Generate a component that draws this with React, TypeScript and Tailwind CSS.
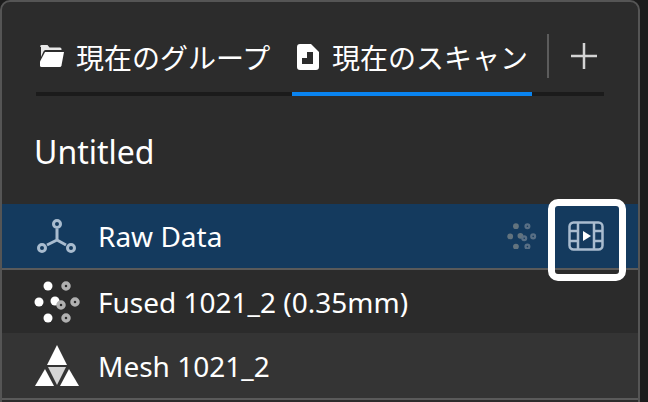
const jp = "font-['Noto_Sans_CJK_JP','Noto_Sans',sans-serif]";

function FolderIcon() {
  return (
    <svg width="24" height="24" viewBox="0 0 24 24" className="-mt-[2px] shrink-0">
      <path d="M0 2.500Q0 1 1.500 1H7.500L9.500 3.500H20Q21.500 3.500 21.500 5V6H5.500Q4 6 3.500 7.500L1 13V3Z" fill="#e8e8e8" />
      <path d="M5 8H24L21.500 21.500Q21.200 23 19.500 23H1.500Q0 23 0 21.500V17.500L5 8Z" fill="#ffffff" />
    </svg>
  );
}

function ScanIcon() {
  return (
    <svg width="22" height="26" viewBox="0 0 22 26" className="shrink-0">
      <path
        fillRule="evenodd"
        d="M3 0H14L22 8V23Q22 26 19 26H3Q0 26 0 23V3Q0 0 3 0ZM16 8H10V14H5V20H16Z"
        fill="#ffffff"
      />
    </svg>
  );
}

function GraphIcon() {
  return (
    <svg width="42" height="42" viewBox="0 0 42 42" className="shrink-0" fill="none" stroke="#a9bccf" strokeWidth="3">
      <circle cx="21" cy="9" r="3.500" />
      <circle cx="6" cy="33" r="3.500" />
      <circle cx="35" cy="33" r="3.500" />
      <path d="M21 14V25M21 25L11 30M21 25L30 30" />
    </svg>
  );
}

function DotsIcon({ solid, ring, width }: { solid: string; ring: string; width: number }) {
  return (
    <svg width={width} viewBox="0 0 47 42" className="shrink-0">
      <circle cx="14" cy="5" r="4.500" fill={solid} />
      <circle cx="5" cy="21" r="4.500" fill={solid} />
      <circle cx="21" cy="20" r="4.500" fill={solid} />
      <circle cx="14" cy="37" r="4.500" fill={solid} />
      <g fill="none" stroke={ring} strokeWidth="3.500">
        <circle cx="32" cy="5" r="3" />
        <circle cx="27" cy="24" r="3" />
        <circle cx="41" cy="21" r="3" />
        <circle cx="32" cy="37" r="3" />
      </g>
    </svg>
  );
}

function MeshIcon() {
  return (
    <svg width="44" height="42" viewBox="0 0 44 42" className="shrink-0" fill="#ffffff">
      <path d="M22 0L32 20H12Z" />
      <path d="M10 24L19 41H0Z" />
      <path d="M34 24L44 41H25Z" />
      <path d="M13 22H31L22 40Z" fill="#d4d4d4" />
    </svg>
  );
}

function FilmIcon() {
  return (
    <svg width="36" height="30" viewBox="0 0 36 30" className="shrink-0" fill="none" stroke="#a9bccf" strokeWidth="2.500">
      <rect x="1.500" y="1.500" width="33" height="27" rx="4" />
      <path d="M10 2V28M26 2V28M2 10H10M2 20H10M26 10H34M26 20H34" />
      <path d="M15 10L23 15L15 20Z" fill="#ffffff" stroke="none" />
    </svg>
  );
}

function RowIcon({ children }: { children: React.ReactNode }) {
  return <div className="flex w-[96px] shrink-0 justify-center pl-[16px] pr-[2px]">{children}</div>;
}

export default function App() {
  return (
    <div className={`h-[402px] w-[648px] overflow-hidden bg-[#1c1c1c] ${jp}`}>
      <div className="h-[420px] w-[640px] rounded-t-[10px] border-2 border-[#555555] bg-[#2c2c2c]">
        <div className="ml-[34px] mr-[34px] mt-[28px] flex h-[66px] items-stretch border-b-4 border-[#1b1b1b]">
          <div className="flex w-[256px] items-center gap-[12px] pb-[8px] pl-[4px]">
            <FolderIcon />
            <span className="whitespace-nowrap text-[28px] leading-none text-white">現在のグループ</span>
          </div>
          <div className="-mb-1 flex w-[240px] items-center gap-[13px] border-b-4 border-[#0a84f0] pb-[8px] pl-[5px]">
            <ScanIcon />
            <span className="whitespace-nowrap text-[28px] leading-none text-white">現在のスキャン</span>
          </div>
          <div className="mb-[14px] ml-[15px] mt-[4px] w-[2px] bg-[#5c5c5c]" />
          <div className="flex flex-1 items-center justify-center pb-[10px] pl-[15px] text-[#d4d4d4]">
            <svg width="26" height="26" viewBox="0 0 26 26" stroke="currentColor" strokeWidth="2.500">
              <path d="M13 0V26M0 13H26" />
            </svg>
          </div>
        </div>
        <div className="mt-[36px] h-[72px] pl-[32px] font-['Noto_Sans',sans-serif] text-[32px] leading-[40px] text-white">
          Untitled
        </div>
        <div className="font-['Noto_Sans',sans-serif]">
          <div className="relative flex h-[66px] items-center border-b-2 border-[#5a5a5a] bg-[#143a5e]">
            <RowIcon>
              <GraphIcon />
            </RowIcon>
            <span className="flex-1 text-[28px] leading-none text-white">Raw Data</span>
            <div className="mr-[31px] opacity-40">
              <DotsIcon solid="#d8c8b0" ring="#c0c0c0" width={30} />
            </div>
            <div className="mr-[34px]">
              <FilmIcon />
            </div>
            <div className="absolute -top-[5px] right-[12px] h-[82px] w-[78px] rounded-[10px] border-[7px] border-white" />
          </div>
          <div className="flex h-[63px] items-center bg-[#2b2b2b]">
            <RowIcon>
              <DotsIcon solid="#ffffff" ring="#b0b0b0" width={47} />
            </RowIcon>
            <span className="text-[28px] leading-none text-white">Fused 1021_2 (0.35mm)</span>
          </div>
          <div className="flex h-[67px] items-center border-b-2 border-[#5a5a5a] bg-[#343434]">
            <RowIcon>
              <MeshIcon />
            </RowIcon>
            <span className="text-[28px] leading-none text-white">Mesh 1021_2</span>
          </div>
        </div>
      </div>
    </div>
  );
}
